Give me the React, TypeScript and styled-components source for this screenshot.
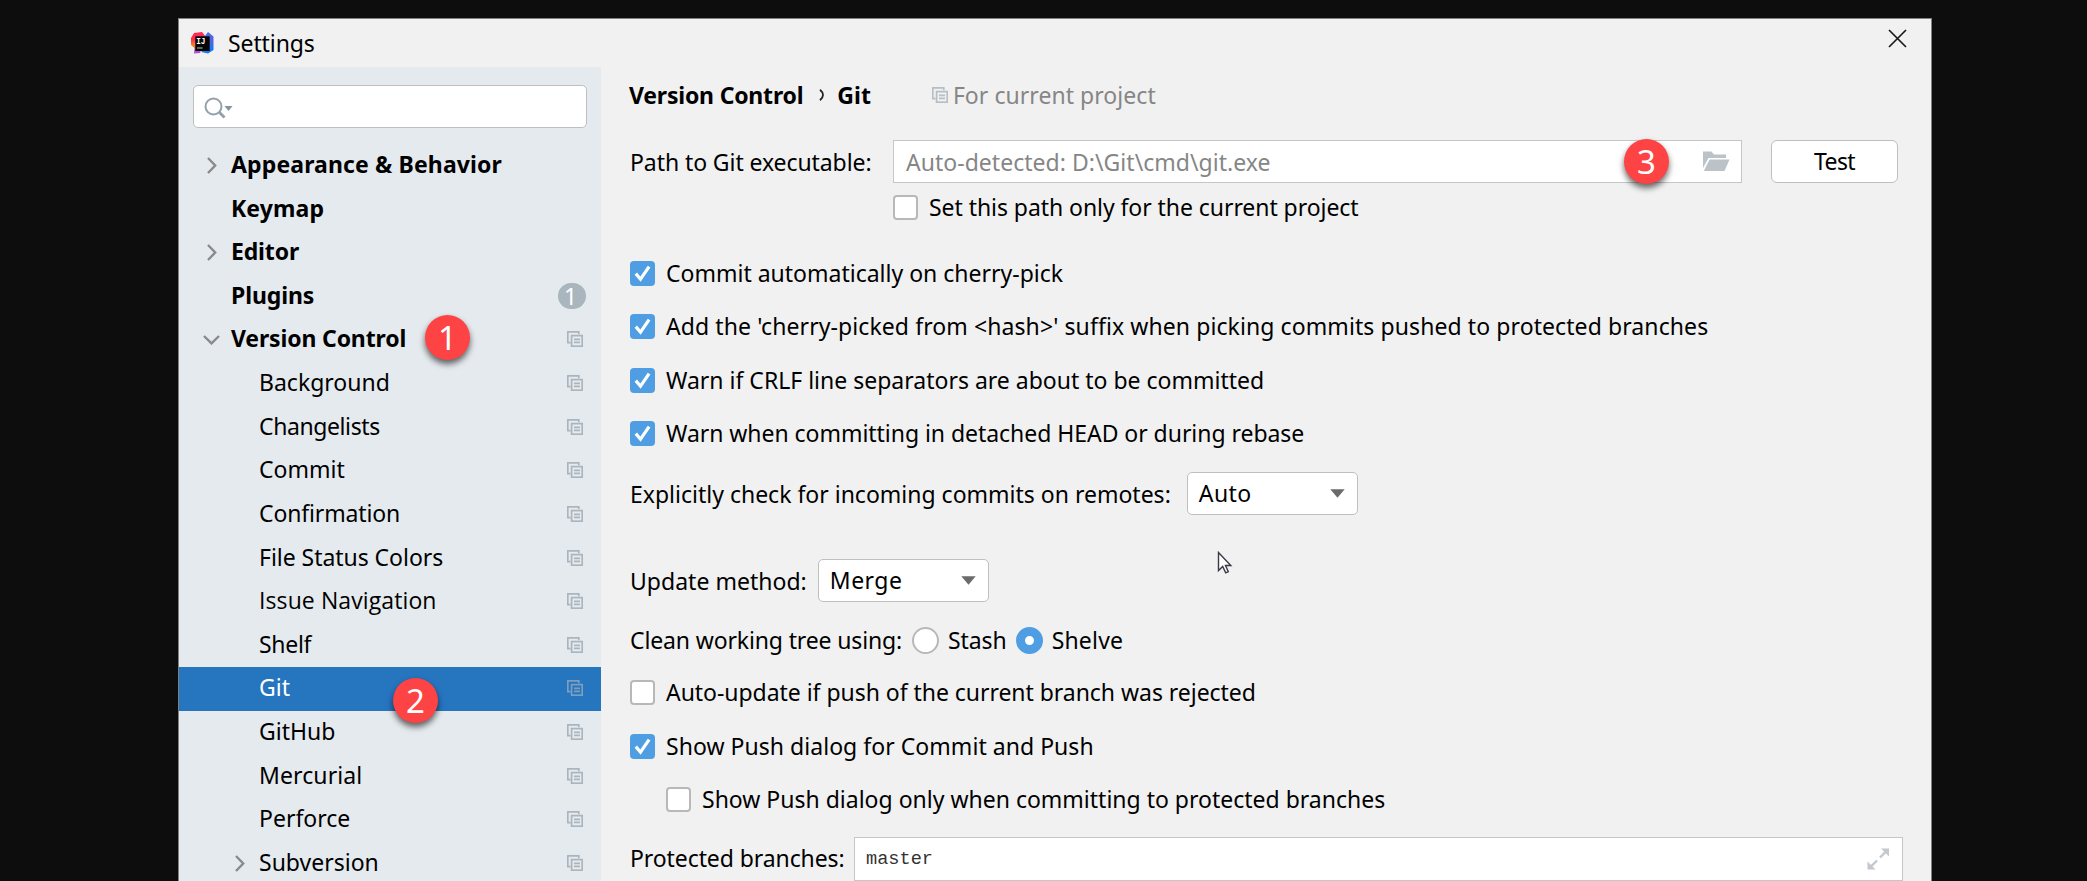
import React from 'react';
import styled, { createGlobalStyle } from 'styled-components';

const GlobalStyle = createGlobalStyle`
  * { box-sizing: border-box; }
  html, body { margin: 0; background: #0d0d0d; }
  body {
    height: 881px;
    overflow: hidden;
    font-family: "Noto Sans", "Open Sans", sans-serif;
    font-size: 23px;
    color: #000;
  }
`;

const Desktop = styled.div`
  height: 881px;
  padding: 18px 0 0 178px;
  background: #0d0d0d;
  overflow: hidden;
`;

const Window = styled.div`
  width: 1754px;
  height: 900px;
  display: flex;
  flex-direction: column;
  background: #f1f1f1;
  border: 1px solid #808080;
`;

const TitleBar = styled.header`
  flex: none;
  height: 48px;
  display: flex;
  justify-content: space-between;
  padding: 0 24px 0 12px;
`;

const TitleGroup = styled.div`
  display: flex;
  align-items: center;
  gap: 14px;
  line-height: 46px;
  height: 47px;
  letter-spacing: -0.1px;
`;

const CloseIcon = styled.svg`
  margin-top: 10px;
`;

const Body = styled.div`
  flex: 1;
  display: flex;
  min-height: 0;
`;

const Sidebar = styled.nav`
  width: 422px;
  flex: none;
  background: #e5eaee;
`;

const SearchBox = styled.div`
  width: 394px;
  height: 43px;
  margin: 18px 0 0 14px;
  padding: 9px 0 0 10px;
  background: #fff;
  border: 1px solid #bfbfbf;
  border-radius: 5px;
`;

const Tree = styled.div`
  padding-top: 15.6px;
`;

const TreeRow = styled.div<{ $child?: boolean; $selected?: boolean }>`
  position: relative;
  height: 43.64px;
  display: flex;
  align-items: center;
  padding: 0 18px 0 ${p => (p.$child ? 50 : 22)}px;
  font-weight: ${p => (p.$child ? 400 : 700)};
  color: ${p => (p.$selected ? '#fff' : '#000')};
  background: ${p => (p.$selected ? '#2675bf' : 'transparent')};
`;

const ArrowSlot = styled.span`
  width: 30px;
  flex: none;
  display: flex;
  justify-content: center;
  padding-right: 9px;
`;

const TreeLabel = styled.span<{ $ls?: number; $plain?: boolean }>`
  flex: 1;
  white-space: nowrap;
  line-height: 32px;
  padding-bottom: 3px;
  letter-spacing: ${p => p.$ls || 0}px;
  font-family: ${p => (p.$plain ? '"Open Sans"' : '"Noto Sans"')}, sans-serif;
`;

const CountBadge = styled.span`
  width: 28px;
  height: 26px;
  margin-right: -3px;
  border-radius: 13px;
  background: #a9b6be;
  color: #fff;
  font-weight: 400;
  font-size: 23px;
  line-height: 26px;
  padding-left: 6px;
`;

const ScopeIcon = styled.svg`
  flex: none;
  margin-bottom: 1px;
`;

const Marker = styled.span<{ $x: number; $y: number }>`
  position: absolute;
  left: ${p => p.$x}px;
  top: ${p => p.$y}px;
  width: 45px;
  height: 45px;
  border-radius: 50%;
  background: #fe4345;
  box-shadow: 0 4px 6px rgba(0, 0, 0, 0.6);
  color: #fff;
  font-size: 33px;
  font-weight: 400;
  line-height: 46px;
  text-align: center;
  z-index: 2;
`;

const Main = styled.main`
  flex: 1;
  position: relative;
  padding: 0 31px 0 29px;
`;

const Line = styled.div<{ $h: number; $mt: number; $indent?: number }>`
  display: flex;
  align-items: center;
  height: ${p => p.$h}px;
  margin-top: ${p => p.$mt}px;
  padding-left: ${p => p.$indent || 0}px;
`;

const Breadcrumbs = styled(Line)`
  margin-left: -1px;
`;

const Label = styled.span<{ $w?: number; $ls?: number; $muted?: boolean; $bold?: boolean; $up?: number }>`
  flex: none;
  width: ${p => (p.$w ? `${p.$w}px` : 'auto')};
  white-space: nowrap;
  line-height: 32px;
  padding-bottom: ${p => p.$up || 0}px;
  letter-spacing: ${p => p.$ls || 0}px;
  color: ${p => (p.$muted ? '#868686' : '#000')};
  font-weight: ${p => (p.$bold ? 700 : 400)};
`;

const Field = styled.div<{ $w: number }>`
  position: relative;
  width: ${p => p.$w}px;
  height: 43px;
  display: flex;
  align-items: center;
  justify-content: space-between;
  padding: 0 11px 0 12px;
  background: #fff;
  border: 1px solid #c6c6c6;
`;

const Branches = styled(Field)`
  height: 44px;
  padding: 0 12px 0 11px;
`;

const Mono = styled.span`
  font: 18.6px/24px "Liberation Mono", monospace;
  color: #333;
  padding-top: 2px;
`;

const Button = styled.button`
  width: 127px;
  height: 43px;
  margin-left: 29px;
  padding: 0 0 1px;
  background: #fff;
  border: 1px solid #bfbfbf;
  border-radius: 6px;
  font: inherit;
  letter-spacing: -0.6px;
  color: #000;
`;

const Combo = styled.div<{ $ml: number; $ls: number }>`
  width: 171px;
  height: 43px;
  margin-left: ${p => p.$ml}px;
  padding: 0 12px 1px 11px;
  display: flex;
  align-items: center;
  justify-content: space-between;
  background: #fff;
  border: 1px solid #bfbfbf;
  border-radius: 5px;
  letter-spacing: ${p => p.$ls}px;
`;

const Box = styled.span<{ $on?: boolean }>`
  width: 25px;
  height: 25px;
  flex: none;
  margin-right: 11px;
  border-radius: 4px;
  border: ${p => (p.$on ? 'none' : '2px solid #b8b8b8')};
  background: ${p => (p.$on ? '#4f9ee3' : '#fff')};
`;

const Radio = styled.span<{ $on?: boolean; $ml: number; $mr: number }>`
  width: 27px;
  height: 27px;
  flex: none;
  margin: 0 ${p => p.$mr}px 0 ${p => p.$ml}px;
  border-radius: 50%;
  border: ${p => (p.$on ? '9px solid #4f9ee3' : '2px solid #b8b8b8')};
  background: #fff;
`;

const Cursor = styled.svg`
  position: absolute;
  left: 616px;
  top: 484px;
`;

const Spacer = styled.span<{ $w: number }>`
  flex: none;
  width: ${p => p.$w}px;
`;

const CopyIcon = ({ color = '#aab5bd' }: { color?: string }) => (
  <ScopeIcon width="16" height="16" viewBox="0 0 16 16" fill="none" stroke={color} strokeWidth="1.7">
    <path d="M3.6 11.7H.8V.8h11v2.4" />
    <rect x="4.6" y="4.6" width="10.6" height="10.6" />
    <path d="M7 8.3h6M7 11.4h6" />
  </ScopeIcon>
);

const ArrowRight = () => (
  <svg width="10" height="17" viewBox="0 0 10 17" fill="none" stroke="#8a8a8a" strokeWidth="2.4">
    <path d="M1 1l7.2 7.5L1 16" />
  </svg>
);

const ArrowDown = () => (
  <svg width="17" height="10" viewBox="0 0 17 10" fill="none" stroke="#8a8a8a" strokeWidth="2.4">
    <path d="M1 1l7.5 7.4L16 1" />
  </svg>
);

const Triangle = () => (
  <svg width="15" height="9" viewBox="0 0 15 9">
    <path d="M.3.3h14.4L7.500 8.700z" fill="#6b6b6b" />
  </svg>
);

const Check = ({ on }: { on?: boolean }) => (
  <Box $on={on}>
    {on && (
      <svg width="25" height="25" viewBox="0 0 25 25" fill="none" stroke="#fff" strokeWidth="3.200">
        <path d="M5.800 12.600l4.700 5.600 8.600-12.600" />
      </svg>
    )}
  </Box>
);

const LogoText = styled.text`
  font: 700 9px "Liberation Mono", monospace;
`;

const IdeaLogo = () => (
  <svg width="23" height="22" viewBox="0 0 23 22">
    <defs>
      <linearGradient id="warm" x1="0" y1="0" x2="0" y2="1">
        <stop offset="0" stopColor="#fe2857" />
        <stop offset="0.35" stopColor="#fb3048" />
        <stop offset="0.6" stopColor="#fc801d" />
        <stop offset="0.75" stopColor="#e06a70" />
        <stop offset="0.9" stopColor="#b24fd6" />
      </linearGradient>
      <linearGradient id="cool" x1="0" y1="0" x2="0.3" y2="1">
        <stop offset="0" stopColor="#3d6fea" />
        <stop offset="0.6" stopColor="#5a62e0" />
        <stop offset="1" stopColor="#0f7df5" />
      </linearGradient>
    </defs>
    <path d="M3 1l8-1 4 5-6 16-6 .5.500-5.500-3.500-3L0 6z" fill="url(#warm)" />
    <path d="M14 4l3-4 5.500 4.500V18L17 21.500l-7-1.500 4-3z" fill="url(#cool)" />
    <rect x="4.300" y="4.300" width="14.400" height="14.700" fill="#050505" />
    <LogoText x="5.200" y="11.500" fill="#fff" textLength="9" lengthAdjust="spacingAndGlyphs">IJ</LogoText>
    <path d="M6 16h5.500" stroke="#999" strokeWidth="1.300" />
  </svg>
);

const FolderIcon = () => (
  <svg width="27" height="21" viewBox="0 0 27 21" fill="#bcc3c8">
    <path d="M0 17V.5h8.500l2.500 3h12v3.500H5.500z" />
    <path d="M6.500 8.500H26.500L21.500 20H.8z" />
  </svg>
);

const ExpandIcon = () => (
  <svg width="23" height="22" viewBox="0 0 23 22" fill="#c2c8cc" stroke="#c2c8cc">
    <path d="M14 .5h8v8z" stroke="none" />
    <path d="M.5 13.500v8h8z" stroke="none" />
    <path d="M19 3.500l-6 6M4 18.500l6-6" strokeWidth="2.400" />
  </svg>
);

type Item = {
  name: string;
  child?: boolean;
  arrow?: 'right' | 'down';
  copy?: boolean;
  selected?: boolean;
  count?: string;
  ls?: number;
  plain?: boolean;
  marker?: { n: string; x: number; y: number };
};

const items: Item[] = [
  { name: 'Appearance & Behavior', arrow: 'right', ls: 0.13 },
  { name: 'Keymap', ls: 0.1 },
  { name: 'Editor', arrow: 'right', ls: -0.15 },
  { name: 'Plugins', count: '1', ls: -0.1 },
  { name: 'Version Control', arrow: 'down', copy: true, ls: -0.15, marker: { n: '1', x: 246, y: -3 } },
  { name: 'Background', child: true, copy: true },
  { name: 'Changelists', child: true, copy: true, ls: -0.4 },
  { name: 'Commit', child: true, copy: true },
  { name: 'Confirmation', child: true, copy: true, ls: -0.14 },
  { name: 'File Status Colors', child: true, copy: true, ls: -0.04 },
  { name: 'Issue Navigation', child: true, copy: true, ls: 0.1, plain: true },
  { name: 'Shelf', child: true, copy: true, ls: -0.3 },
  { name: 'Git', child: true, copy: true, selected: true, marker: { n: '2', x: 214, y: 11 } },
  { name: 'GitHub', child: true, copy: true },
  { name: 'Mercurial', child: true, copy: true, ls: 0.1 },
  { name: 'Perforce', child: true, copy: true },
  { name: 'Subversion', child: true, copy: true, arrow: 'right' },
];

export default function App() {
  return (
    <>
      <GlobalStyle />
      <Desktop>
        <Window>
          <TitleBar>
            <TitleGroup>
              <IdeaLogo />
              Settings
            </TitleGroup>
            <CloseIcon width="19" height="19" viewBox="0 0 19 19" stroke="#1a1a1a" strokeWidth="1.700">
              <path d="M1 1l17 17M18 1L1 18" />
            </CloseIcon>
          </TitleBar>
          <Body>
            <Sidebar>
              <SearchBox>
                <svg width="30" height="23" viewBox="0 0 30 23" fill="none" stroke="#93a1a9" strokeWidth="2">
                  <circle cx="9.500" cy="9.500" r="8" />
                  <path d="M15 15l5.500 5.500" strokeWidth="2.800" />
                  <path d="M20.500 9h8l-4 5z" fill="#84939c" stroke="none" />
                </svg>
              </SearchBox>
              <Tree>
                {items.map(it => (
                  <TreeRow key={it.name} $child={it.child} $selected={it.selected}>
                    <ArrowSlot>
                      {it.arrow === 'right' && <ArrowRight />}
                      {it.arrow === 'down' && <ArrowDown />}
                    </ArrowSlot>
                    <TreeLabel $ls={it.ls} $plain={it.plain}>{it.name}</TreeLabel>
                    {it.count && <CountBadge>{it.count}</CountBadge>}
                    {it.copy && <CopyIcon color={it.selected ? '#7d9fbd' : undefined} />}
                    {it.marker && <Marker $x={it.marker.x} $y={it.marker.y}>{it.marker.n}</Marker>}
                  </TreeRow>
                ))}
              </Tree>
            </Sidebar>
            <Main>
              <Breadcrumbs $h={40} $mt={8}>
                <Label $bold $ls={-0.2}>Version Control</Label>
                <Spacer $w={16} />
                <svg width="6" height="12" viewBox="0 0 6 12" fill="none" stroke="#222" strokeWidth="1.800">
                  <path d="M1 .8q3 2.500 3 5.200T1 11.200" />
                </svg>
                <Spacer $w={12} />
                <Label $bold>Git</Label>
                <Spacer $w={61} />
                <CopyIcon color="#b5bfc5" />
                <Spacer $w={5} />
                <Label $muted $ls={0.05}>For current project</Label>
              </Breadcrumbs>
              <Line $h={43} $mt={25}>
                <Label $w={263} $ls={-0.08}>Path to Git executable:</Label>
                <Field $w={849}>
                  <Label $muted $ls={0.03}>{'Auto-detected: D:\\Git\\cmd\\git.exe'}</Label>
                  <FolderIcon />
                  <Marker $x={730} $y={-2}>3</Marker>
                </Field>
                <Button>Test</Button>
              </Line>
              <Line $h={30} $mt={9} $indent={263}>
                <Check />
                <Label $ls={-0.06}>Set this path only for the current project</Label>
              </Line>
              <Line $h={30} $mt={36}>
                <Check on />
                <Label>Commit automatically on cherry-pick</Label>
              </Line>
              <Line $h={30} $mt={23}>
                <Check on />
                <Label $ls={0.09}>{"Add the 'cherry-picked from <hash>' suffix when picking commits pushed to protected branches"}</Label>
              </Line>
              <Line $h={30} $mt={24}>
                <Check on />
                <Label>Warn if CRLF line separators are about to be committed</Label>
              </Line>
              <Line $h={30} $mt={23}>
                <Check on />
                <Label $ls={-0.04}>Warn when committing in detached HEAD or during rebase</Label>
              </Line>
              <Line $h={43} $mt={24}>
                <Label>Explicitly check for incoming commits on remotes:</Label>
                <Combo $ml={16} $ls={0.4}>Auto<Triangle /></Combo>
              </Line>
              <Line $h={43} $mt={44}>
                <Label $ls={0.02}>Update method:</Label>
                <Combo $ml={11} $ls={0.5}>Merge<Triangle /></Combo>
              </Line>
              <Line $h={30} $mt={23}>
                <Label $ls={-0.14}>Clean working tree using:</Label>
                <Radio $ml={10} $mr={9} />
                <Label $ls={-0.1}>Stash</Label>
                <Radio $on $ml={9} $mr={9} />
                <Label $ls={0.2}>Shelve</Label>
              </Line>
              <Line $h={30} $mt={22}>
                <Check />
                <Label $ls={-0.04}>Auto-update if push of the current branch was rejected</Label>
              </Line>
              <Line $h={30} $mt={24}>
                <Check on />
                <Label $ls={0.04}>Show Push dialog for Commit and Push</Label>
              </Line>
              <Line $h={30} $mt={23} $indent={36}>
                <Check />
                <Label>Show Push dialog only when committing to protected branches</Label>
              </Line>
              <Line $h={44} $mt={23}>
                <Label $w={224} $ls={-0.09} $up={3}>Protected branches:</Label>
                <Branches $w={1049}>
                  <Mono>master</Mono>
                  <ExpandIcon />
                </Branches>
              </Line>
              <Cursor width="16" height="24" viewBox="0 0 16 24" fill="#fff" stroke="#3a3a44" strokeWidth="1.400">
                <path d="M1.500 1.500v18l4.200-4 3 6.300 2.600-1.200-2.800-6.100h5.300z" />
              </Cursor>
            </Main>
          </Body>
        </Window>
      </Desktop>
    </>
  );
}
